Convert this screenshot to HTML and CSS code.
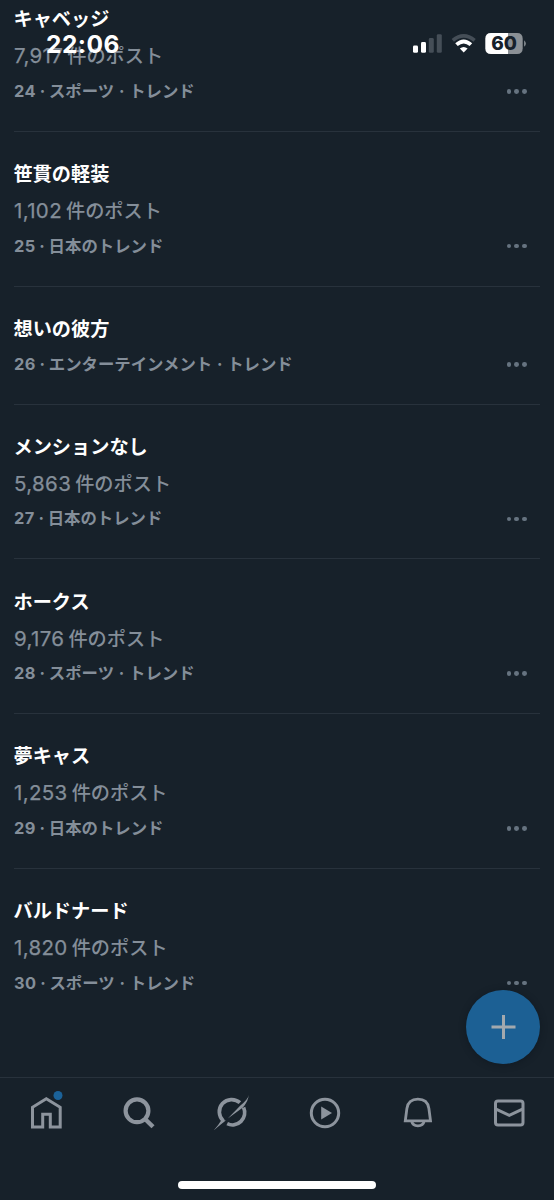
FILE: index.html
```html
<!DOCTYPE html>
<html lang="ja">
<head>
<meta charset="utf-8">
<title>トレンド</title>
<link rel="stylesheet" href="styles.css">
</head>
<body>
<div class="screen">
  <header class="status">
    <span class="time">22:06</span>
    <svg class="indicators" width="116" height="24" viewBox="0 0 116 24">
      <g fill="#fff"><rect x="3" y="13.5" width="5" height="7.3" rx="1.4"/><rect x="11" y="10" width="5" height="10.8" rx="1.4"/></g>
      <g fill="#454e57"><rect x="18.8" y="6" width="5" height="14.8" rx="1.4"/><rect x="26.8" y="2.2" width="5" height="18.6" rx="1.4"/></g>
      <path d="M42.8 8.4Q53.7-.8 64.6 8.4" fill="none" stroke="#454e57" stroke-width="3.6"/>
      <path d="M46.5 12.7Q53.7 6.1 60.9 12.7" fill="none" stroke="#fff" stroke-width="3.8"/>
      <path d="M49.8 16.6Q53.7 13.2 57.6 16.6L53.7 20.6Z" fill="#fff"/>
      <path d="M81 1H98V22H81Q75.3 22 75.3 16.2V6.8Q75.3 1 81 1Z" fill="#fff"/>
      <path d="M98 1H107Q112.7 1 112.7 6.8V16.2Q112.7 22 107 22H98Z" fill="#8b9095"/>
      <path d="M114 8.2Q118 11.5 114 14.8Z" fill="#7b8288"/>
      <text class="battery" x="94" y="18.2" text-anchor="middle">60</text>
    </svg>
  </header>

  <main class="trends">
    <article class="trend">
      <h2>キャベッジ</h2>
      <p class="posts"><span class="count">7,917</span>件のポスト</p>
      <p class="meta"><span class="rank">24</span><i>·</i>スポーツ<i class="wide">·</i>トレンド<span class="more"><b></b><b></b><b></b></span></p>
    </article>
    <article class="trend">
      <h2>笹貫の軽装</h2>
      <p class="posts"><span class="count">1,102</span>件のポスト</p>
      <p class="meta"><span class="rank">25</span><i>·</i>日本のトレンド<span class="more"><b></b><b></b><b></b></span></p>
    </article>
    <article class="trend">
      <h2>想いの彼方</h2>
      <p class="meta"><span class="rank">26</span><i>·</i>エンターテインメント<i class="wide">·</i>トレンド<span class="more"><b></b><b></b><b></b></span></p>
    </article>
    <article class="trend">
      <h2>メンションなし</h2>
      <p class="posts"><span class="count">5,863</span>件のポスト</p>
      <p class="meta"><span class="rank">27</span><i>·</i>日本のトレンド<span class="more"><b></b><b></b><b></b></span></p>
    </article>
    <article class="trend">
      <h2>ホークス</h2>
      <p class="posts"><span class="count">9,176</span>件のポスト</p>
      <p class="meta"><span class="rank">28</span><i>·</i>スポーツ<i class="wide">·</i>トレンド<span class="more"><b></b><b></b><b></b></span></p>
    </article>
    <article class="trend">
      <h2>夢キャス</h2>
      <p class="posts"><span class="count">1,253</span>件のポスト</p>
      <p class="meta"><span class="rank">29</span><i>·</i>日本のトレンド<span class="more"><b></b><b></b><b></b></span></p>
    </article>
    <article class="trend">
      <h2>バルドナード</h2>
      <p class="posts"><span class="count">1,820</span>件のポスト</p>
      <p class="meta"><span class="rank">30</span><i>·</i>スポーツ<i class="wide">·</i>トレンド<span class="more"><b></b><b></b><b></b></span></p>
    </article>
  </main>

  <button class="compose" aria-label="作成">
    <svg width="26" height="26" viewBox="0 0 26 26"><path d="M13.5 1V25M1.5 13H25.5" stroke="#a3a9ae" stroke-width="3"/></svg>
  </button>

  <footer class="bottom">
    <nav class="tabs">
      <svg viewBox="0 0 40 40"><path d="M6.5 34V14.3L20.3 5.8L34.2 14.3V34H24.3V21.3H16.7V34Z" fill="none" stroke="#8d949d" stroke-width="3"/><circle cx="32" cy="2.5" r="4.5" fill="#1b6299"/></svg>
      <svg viewBox="0 0 40 40"><circle cx="18" cy="17.8" r="11.4" fill="none" stroke="#8d949d" stroke-width="4.2"/><path d="M26.3 26.2L34 33.8" stroke="#8d949d" stroke-width="4.4"/></svg>
      <svg viewBox="-2 0 40 40" fill="none" stroke="#8d949d" stroke-width="3.7"><path d="M10.4 28A12.2 12.2 0 0 1 26.9 9.7"/><path d="M30.6 14.6A12.2 12.2 0 0 1 14.2 30.6"/><path d="M14.8 25.4L27.4 12.6Q34.8 6.4 36.2 1.8Q34.6 8.5 31.7 12.3L29.6 14.8ZM8.8 26.6L12.8 27.6Q9 30.4 .6 37.6Q6 31.5 8.8 26.6Z" fill="#8d949d" stroke="none"/></svg>
      <svg viewBox="-1 0 40 40"><circle cx="20" cy="20" r="13.7" fill="none" stroke="#8d949d" stroke-width="3"/><path d="M16.2 13.6L27 20L16.2 26.4Z" fill="#8d949d"/></svg>
      <svg viewBox="-1.8 0 40 40" fill="none" stroke="#8d949d" stroke-width="2.8"><path d="M7.5 27.8L9.1 15.5C10 9.5 14 6.2 20.1 6.2S30.2 9.5 31.1 15.5L32.7 27.8Z"/><path d="M14 28.5C15 34.2 25.2 34.2 26.2 28.5"/></svg>
      <svg viewBox="-.5 0 40 40" fill="none" stroke="#8d949d" stroke-width="3"><rect x="6" y="8" width="27.5" height="24" rx="2.5"/><path d="M6 15.8L19.8 22.3L33.5 15.8"/></svg>
    </nav>
    <div class="home-bar"></div>
  </footer>
</div>
</body>
</html>
```
FILE: styles.css
```css
* { box-sizing: border-box; }
body {
  margin: 0;
  background: #17212a;
  font-family: Inter, "Noto Sans CJK JP", sans-serif;
}
.screen {
  position: relative;
  display: flex;
  flex-direction: column;
  width: 554px;
  height: 1200px;
  overflow: hidden;
}
.status {
  position: absolute;
  z-index: 2;
  top: 30px;
  left: 46px;
  right: 28px;
  height: 28px;
  display: flex;
  align-items: center;
  justify-content: space-between;
}
.time {
  color: #fff;
  font-size: 24.5px;
  font-weight: 700;
  letter-spacing: .5px;
}
.battery {
  fill: #17212a;
  font-size: 19px;
  font-weight: 800;
}
.trends {
  flex: 1;
  margin-top: -22.8px;
  padding: 0 14px;
}
.trend {
  padding: 24.2px 0 22px;
  border-bottom: 1px solid #28323c;
}
.trend:last-child { border-bottom: 0; }
h2, p { margin: 0; white-space: nowrap; }
h2 {
  color: #fff;
  font-size: 19.2px;
  line-height: 36px;
  font-weight: 700;
  margin-left: -.5px;
}
.posts {
  display: flex;
  gap: 4px;
  height: 36.5px;
  padding-top: 1px;
  color: #848e99;
  font-size: 19.2px;
  line-height: 36.5px;
  font-weight: 500;
}
.count {
  font-size: 20.5px;
  font-weight: 400;
  letter-spacing: .35px;
  -webkit-text-stroke: .25px currentColor;
}
.meta {
  display: flex;
  align-items: center;
  color: #848e99;
  font-size: 16.4px;
  line-height: 35px;
  height: 35px;
  font-weight: 700;
}
.rank { letter-spacing: .4px; }
.meta i {
  width: 13px;
  font-style: normal;
  text-align: center;
}
.meta .wide { width: 15px; }
.more {
  display: flex;
  gap: 3px;
  margin-left: auto;
  padding-right: 13px;
}
.more b {
  width: 4.8px;
  height: 4.8px;
  border-radius: 50%;
  background: #667380;
}
.compose {
  position: absolute;
  z-index: 2;
  left: 466px;
  top: 990px;
  width: 74px;
  height: 74px;
  padding: 0;
  display: grid;
  place-items: center;
  border: 0;
  border-radius: 50%;
  background: #1c6094;
  box-shadow: 0 1px 6px #0b141c80;
}
.bottom {
  flex: none;
  height: 123px;
  display: flex;
  flex-direction: column;
  align-items: center;
  border-top: 1px solid #28323c;
  background: #17212a;
}
.tabs {
  width: 554px;
  display: flex;
  justify-content: space-between;
  padding: 15px 25px 0 26px;
}
.tabs svg {
  width: 40px;
  height: 40px;
  overflow: visible;
}
.home-bar {
  width: 198px;
  height: 8px;
  margin-top: 47.5px;
  border-radius: 4px;
  background: #fff;
}
```
